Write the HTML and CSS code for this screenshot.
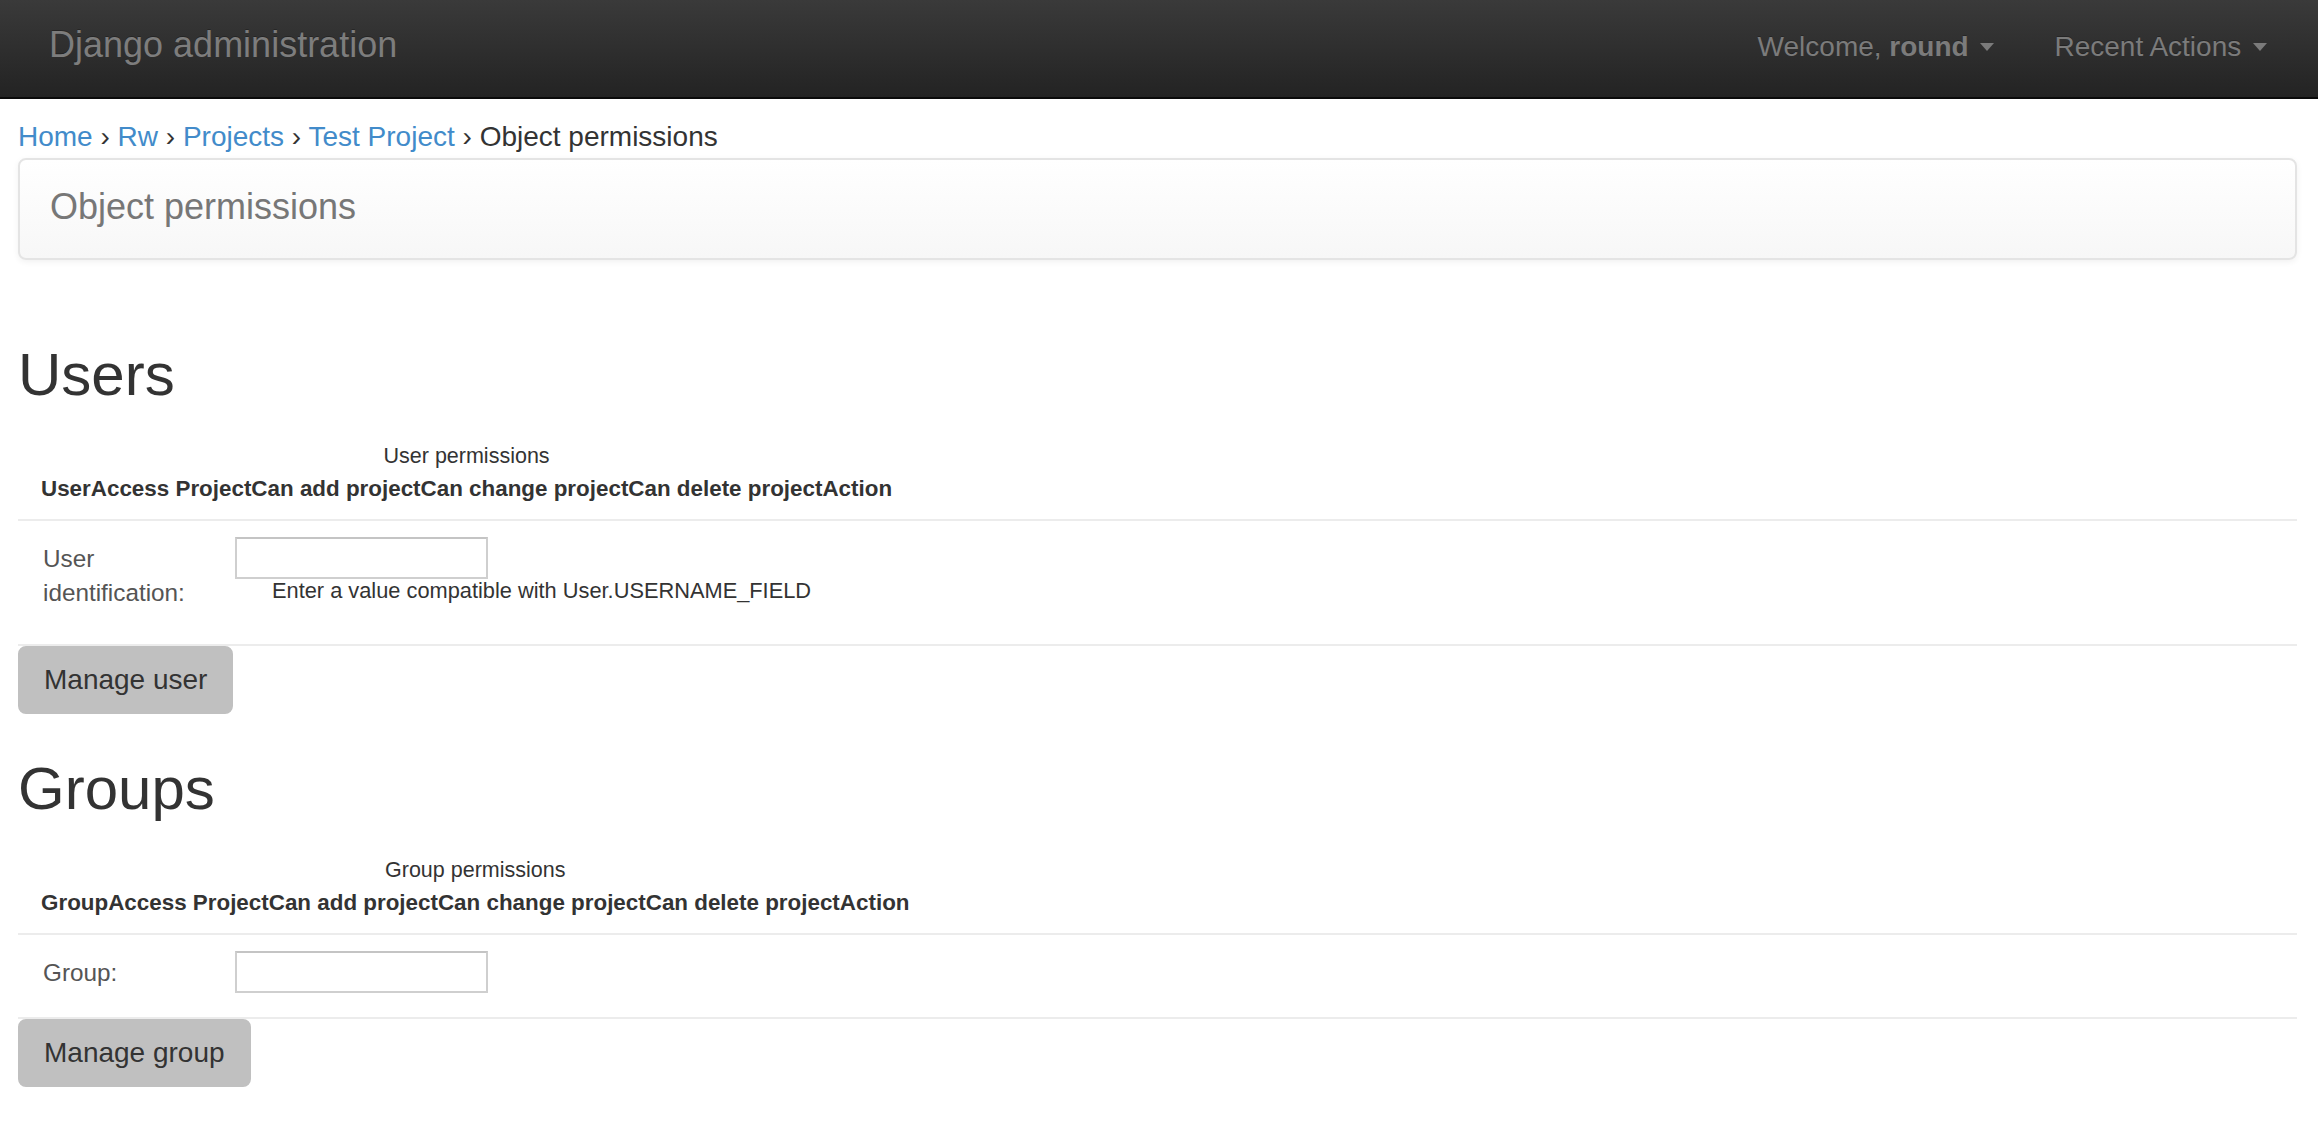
FILE: index.html
```
<!DOCTYPE html>
<html lang="en">
<head>
<meta charset="utf-8">
<title>Object permissions | Django site admin</title>
<link rel="stylesheet" href="styles.css">
</head>
<body>
<header class="navbar">
  <a class="brand" href="#">Django administration</a>
  <nav class="nav-right">
    <a class="nav-link" href="#">Welcome, <strong>round</strong> <span class="caret"></span></a>
    <a class="nav-link" href="#">Recent Actions <span class="caret"></span></a>
  </nav>
</header>
<main class="container">
  <div class="breadcrumbs"><a href="#">Home</a> › <a href="#">Rw</a> › <a href="#">Projects</a> › <a href="#">Test Project</a> › Object permissions</div>
  <div class="page-header"><span class="page-title">Object permissions</span></div>

  <section class="perm-section">
    <h2 class="section-title">Users</h2>
    <table class="perm-table">
      <caption>User permissions</caption>
      <thead>
        <tr><th>User</th><th>Access Project</th><th>Can add project</th><th>Can change project</th><th>Can delete project</th><th>Action</th></tr>
      </thead>
      <tbody></tbody>
    </table>
    <form class="perm-form">
      <fieldset class="module">
        <div class="form-row">
          <label class="row-label" for="id_user">User identification:</label>
          <div class="field">
            <input class="text-input" id="id_user" type="text">
            <p class="help">Enter a value compatible with User.USERNAME_FIELD</p>
          </div>
        </div>
      </fieldset>
      <div class="submit-row"><button class="btn" type="button">Manage user</button></div>
    </form>
  </section>

  <section class="perm-section">
    <h2 class="section-title">Groups</h2>
    <table class="perm-table">
      <caption>Group permissions</caption>
      <thead>
        <tr><th>Group</th><th>Access Project</th><th>Can add project</th><th>Can change project</th><th>Can delete project</th><th>Action</th></tr>
      </thead>
      <tbody></tbody>
    </table>
    <form class="perm-form">
      <fieldset class="module">
        <div class="form-row">
          <label class="row-label" for="id_group">Group:</label>
          <div class="field">
            <input class="text-input" id="id_group" type="text">
          </div>
        </div>
      </fieldset>
      <div class="submit-row"><button class="btn" type="button">Manage group</button></div>
    </form>
  </section>
</main>
</body>
</html>
```
FILE: styles.css
```
* { box-sizing: border-box; }

html, body {
  margin: 0;
  padding: 0;
  background: #fff;
}

body {
  font-family: "Liberation Sans", Arial, Helvetica, sans-serif;
  font-size: 28px;
  line-height: 40px;
  color: #333;
}

a { text-decoration: none; }

/* Top navbar */
.navbar {
  display: flex;
  align-items: flex-start;
  height: 99px;
  padding: 0 21px 0 18px;
  background: linear-gradient(to bottom, #3a3a3a 0%, #232323 100%);
  border-bottom: 2px solid #0a0a0a;
}

.brand {
  margin-top: 25px;
  padding: 0 31px;
  font-size: 36px;
  line-height: 40px;
  color: #7d7d7d;
  text-shadow: 0 -1px 0 rgba(0, 0, 0, .25);
}

.nav-right {
  display: flex;
  margin-left: auto;
}

.nav-link {
  margin-top: 27px;
  padding: 0 30px;
  font-size: 28px;
  line-height: 40px;
  color: #7b7b7b;
  text-shadow: 0 -1px 0 rgba(0, 0, 0, .25);
  white-space: nowrap;
}

.nav-link strong { font-weight: bold; }

.caret {
  display: inline-block;
  width: 0;
  height: 0;
  margin-left: 4px;
  vertical-align: 5px;
  border-top: 8px solid #7b7b7b;
  border-left: 7px solid transparent;
  border-right: 7px solid transparent;
}

/* Main content */
.container {
  display: flex;
  flex-direction: column;
  padding: 0 21px 40px 18px;
}

.breadcrumbs {
  margin: 18px 0 1px;
  font-size: 28px;
  line-height: 40px;
  color: #333;
}

.breadcrumbs a { color: #428bca; }

.page-header {
  height: 102px;
  margin-bottom: 40px;
  padding: 27px 30px 0;
  border: 2px solid #e4e4e4;
  border-radius: 8px;
  background: linear-gradient(to bottom, #ffffff 0%, #f7f7f7 100%);
  box-shadow: inset 0 1px 0 rgba(255, 255, 255, .15), 0 2px 6px rgba(0, 0, 0, .06);
}

.page-title {
  font-size: 36px;
  line-height: 40px;
  color: #777;
}

.section-title {
  margin: 42px 0 33px;
  font-size: 60px;
  line-height: 66px;
  font-weight: normal;
  color: #333;
}

.perm-table {
  margin: 0 0 15px 23px;
  border-collapse: collapse;
  border-spacing: 0;
}

.perm-table caption {
  padding: 0 0 3px;
  font-size: 21.5px;
  line-height: 30px;
  color: #333;
  text-align: center;
}

.perm-table th {
  padding: 0;
  font-size: 22.4px;
  line-height: 30px;
  font-weight: bold;
  color: #333;
  white-space: nowrap;
}

.perm-form { margin: 0; }

.module {
  margin: 0;
  padding: 0;
  min-width: 0;
  border: 0;
  border-top: 2px solid #ececec;
}

.form-row {
  display: flex;
  align-items: flex-start;
  padding: 16px 0 24px 25px;
  border-bottom: 2px solid #ececec;
}

.row-label {
  width: 170px;
  margin-right: 22px;
  padding-top: 5px;
  font-size: 24.3px;
  line-height: 34px;
  color: #555;
}

.field {
  display: flex;
  flex-direction: column;
  align-items: flex-start;
}

.text-input {
  width: 253px;
  height: 42px;
  margin: 0;
  padding: 2px 4px;
  font-family: inherit;
  font-size: 22px;
  background: #fff;
  border: 2px solid #cfcfcf;
  border-top-color: #c4c4c4;
  border-radius: 0;
  outline: none;
}

.help {
  margin: 0 0 17px 37px;
  font-size: 21.8px;
  line-height: 24px;
  color: #333;
}

.submit-row { display: flex; }

.btn {
  margin: 0;
  padding: 12px 24px;
  font-family: inherit;
  font-size: 28px;
  line-height: 40px;
  color: #333;
  background: #c0c0c0;
  border: 2px solid #c0c0c0;
  border-radius: 8px;
  cursor: pointer;
}
```
